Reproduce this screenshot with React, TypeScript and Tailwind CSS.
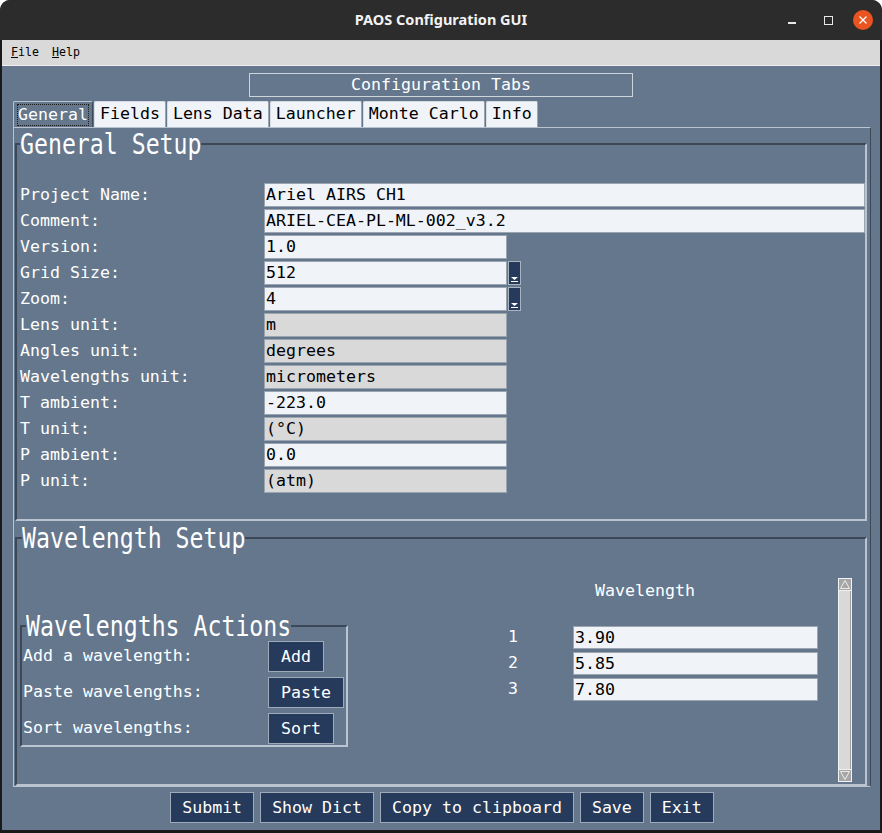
import React from "react";

const mono = "font-['DejaVu_Sans_Mono',monospace]";

type Row = { label: string; value: string; kind: "wide" | "text" | "combo" | "ro" };

const rows: Row[] = [
  { label: "Project Name:", value: "Ariel AIRS CH1", kind: "wide" },
  { label: "Comment:", value: "ARIEL-CEA-PL-ML-002_v3.2", kind: "wide" },
  { label: "Version:", value: "1.0", kind: "text" },
  { label: "Grid Size:", value: "512", kind: "combo" },
  { label: "Zoom:", value: "4", kind: "combo" },
  { label: "Lens unit:", value: "m", kind: "ro" },
  { label: "Angles unit:", value: "degrees", kind: "ro" },
  { label: "Wavelengths unit:", value: "micrometers", kind: "ro" },
  { label: "T ambient:", value: "-223.0", kind: "text" },
  { label: "T unit:", value: "(°C)", kind: "ro" },
  { label: "P ambient:", value: "0.0", kind: "text" },
  { label: "P unit:", value: "(atm)", kind: "ro" },
];

const tabs = ["General", "Fields", "Lens Data", "Launcher", "Monte Carlo", "Info"];

function Field({ value, kind }: { value: string; kind: Row["kind"] }) {
  const bg = kind === "ro" ? "bg-[#d9d9d9]" : "bg-[#f0f3f8]";
  const width = kind === "wide" ? "flex-1" : "w-[243px]";
  return (
    <div className="flex items-start h-[24px]">
      <div
        className={`${width} ${bg} h-[24px] border border-[#9ba5b0] pl-[1px] leading-[22px] text-black whitespace-pre`}
      >
        {value}
      </div>
      {kind === "combo" && (
        <div className="ml-[1px] w-[13px] h-[24px] bg-[#263a5b] border border-[#a9b4c2] flex items-end justify-center pb-[2px]">
          <svg width="7" height="5" viewBox="0 0 7 5" className="block">
            <path d="M0 0h7L3.5 3z" fill="#fff" />
            <rect x="0" y="4" width="7" height="1" fill="#fff" />
          </svg>
        </div>
      )}
    </div>
  );
}

function Legend({ children, ml }: { children: React.ReactNode; ml: string }) {
  return (
    <legend className={`${ml} h-[26px] leading-[26px] text-[23.2px] text-white`}>
      <span className="inline-block scale-y-[1.25] origin-center">{children}</span>
    </legend>
  );
}

function NavyButton({ children, px }: { children: React.ReactNode; px: string }) {
  return (
    <div
      className={`h-[31px] ${px} bg-[#263a5b] border border-[#9fabbb] text-white leading-[29px] whitespace-pre`}
    >
      {children}
    </div>
  );
}

function Scrollbar() {
  return (
    <div className="mt-[27px] h-[204px] w-[14px] flex flex-col border border-[#f2f2f2] bg-[#d9d9d9]">
      <div className="h-[12px] bg-[#a6a6a6] border-b border-[#f2f2f2] flex items-center justify-center">
        <svg width="10" height="9" viewBox="0 0 10 9">
          <path d="M5 0.5L9.5 8.5H0.5z" fill="none" stroke="#ececec" strokeWidth="1" />
        </svg>
      </div>
      <div className="flex-1 border-r border-[#a0a0a0]" />
      <div className="h-[12px] bg-[#a6a6a6] border-t border-[#f2f2f2] flex items-center justify-center">
        <svg width="10" height="9" viewBox="0 0 10 9">
          <path d="M5 8.5L9.5 0.5H0.5z" fill="none" stroke="#ececec" strokeWidth="1" />
        </svg>
      </div>
    </div>
  );
}

export default function App() {
  return (
    <div className="w-[882px] h-[833px] bg-white">
      <div className="w-full h-full flex flex-col rounded-t-[10px] overflow-hidden bg-[#1a1a1a]">
        {/* title bar */}
        <div className="relative h-[40px] bg-[#2c2c2c] flex items-center justify-center shrink-0">
          <span className="font-['Noto_Sans',sans-serif] font-bold text-[14.5px] text-[#f2f2f2]">
            PAOS Configuration GUI
          </span>
          <div className="absolute right-[9px] top-[10px] flex items-center">
            <div className="w-[8px] h-[1.5px] bg-[#e8e8e8] mt-[6px]" />
            <div className="ml-[28px] w-[9px] h-[9px] border border-[#e8e8e8]" />
            <div className="ml-[20px] w-[20px] h-[20px] rounded-full bg-[#e95420] flex items-center justify-center">
              <svg width="8" height="8" viewBox="0 0 8 8">
                <path d="M0.5 0.5L7.5 7.5M7.5 0.5L0.5 7.5" stroke="#fff" strokeWidth="1.3" />
              </svg>
            </div>
          </div>
        </div>

        {/* menu bar */}
        <div
          className={`${mono} h-[26px] bg-[#d9d9d9] border-b border-[#f0f0f0] flex items-center pl-[9px] text-[11.6px] text-black shrink-0 mx-[2px]`}
        >
          <span>
            <span className="underline">F</span>ile
          </span>
          <span className="ml-[13px]">
            <span className="underline">H</span>elp
          </span>
        </div>

        {/* body */}
        <div
          className={`${mono} flex-1 bg-[#64778d] mx-[2px] mb-[3px] pl-[11px] pr-[9px] pt-[7px] pb-[7px] flex flex-col text-[16.6px] text-white`}
        >
          <div className="ml-[236px] w-[384px] h-[24px] border border-[#cdd4dc] flex items-center justify-center leading-[22px]">
            Configuration Tabs
          </div>

          {/* tabs */}
          <div className="mt-[4px] h-[26px] flex items-end">
            {tabs.map((t, i) =>
              i === 0 ? (
                <div
                  key={t}
                  className="h-[26px] px-[3px] bg-[#64778d] border-t border-l border-r border-[#b9c4d0] border-r-[#3c4857] rounded-t-[2px] flex items-center"
                >
                  <span className="border border-dotted border-[#1a1a1a] leading-[20px]">{t}</span>
                </div>
              ) : (
                <div
                  key={t}
                  className="ml-[1px] h-[26px] px-[5px] bg-[#f0f3f8] border-t border-l border-r border-[#d6dce4] border-r-[#9ca6b2] rounded-t-[2px] text-black leading-[24px]"
                >
                  {t}
                </div>
              )
            )}
          </div>

          {/* tab panel */}
          <div className="h-[660px] w-[858px] border border-[#b9c4d0] border-r-[#3c4857] border-b-[#b9c4d0] pl-[1px] pr-[3px]">
            <fieldset className="mt-[3px] border-2 border-[#3c4857] border-r-[#b9c4d0] border-b-[#b9c4d0]">
              <Legend ml="ml-[3px]">General Setup</Legend>
              <div className="mt-[26px] pb-[26px] flex flex-col gap-[2px]">
                {rows.map((r) => (
                  <div key={r.label} className="flex items-center h-[24px]">
                    <div className="w-[247px] pl-[3px] leading-[24px] whitespace-pre">{r.label}</div>
                    <div className={r.kind === "wide" ? "flex-1" : ""}>
                      <Field value={r.value} kind={r.kind} />
                    </div>
                  </div>
                ))}
              </div>
            </fieldset>

            <fieldset className="mt-[4px] border-2 border-[#3c4857] border-r-[#b9c4d0] border-b-[#b9c4d0]">
              <Legend ml="ml-[5px]">Wavelength Setup</Legend>
              <div className="h-[233px] flex">
                {/* actions */}
                <div className="ml-[3px] mt-[62px] w-[328px]">
                  <fieldset className="border-2 border-[#3c4857] border-r-[#b9c4d0] border-b-[#b9c4d0]">
                    <Legend ml="ml-[4px]">Wavelengths Actions</Legend>
                    <div className="mt-[2px] pb-[1px] flex flex-col gap-[5px]">
                      {[
                        ["Add a wavelength:", "Add"],
                        ["Paste wavelengths:", "Paste"],
                        ["Sort wavelengths:", "Sort"],
                      ].map(([label, btn]) => (
                        <div key={btn} className="flex items-center h-[31px]">
                          <div className="w-[246px] pl-[1px] whitespace-pre">{label}</div>
                          <NavyButton px="px-[12px]">{btn}</NavyButton>
                        </div>
                      ))}
                    </div>
                  </fieldset>
                </div>

                {/* wavelength table */}
                <div className="ml-[152px] flex flex-col">
                  <div className="mt-[30px] h-[20px] leading-[20px] pl-[95px]">Wavelength</div>
                  <div className="mt-[25px] flex flex-col gap-[3px]">
                    {["3.90", "5.85", "7.80"].map((v, i) => (
                      <div key={v} className="flex items-center h-[23px]">
                        <div className="w-[73px] pl-[8px]">{i + 1}</div>
                        <div className="w-[245px] h-[23px] bg-[#f0f3f8] border border-[#9ba5b0] pl-[1px] leading-[21px] text-black">
                          {v}
                        </div>
                      </div>
                    ))}
                  </div>
                </div>

                <div className="ml-[20px]">
                  <Scrollbar />
                </div>
              </div>
            </fieldset>
          </div>

          {/* bottom buttons */}
          <div className="mt-[5px] flex justify-center gap-[6px]">
            {["Submit", "Show Dict", "Copy to clipboard", "Save", "Exit"].map((b) => (
              <NavyButton key={b} px="px-[11px]">
                {b}
              </NavyButton>
            ))}
          </div>
        </div>
      </div>
    </div>
  );
}
